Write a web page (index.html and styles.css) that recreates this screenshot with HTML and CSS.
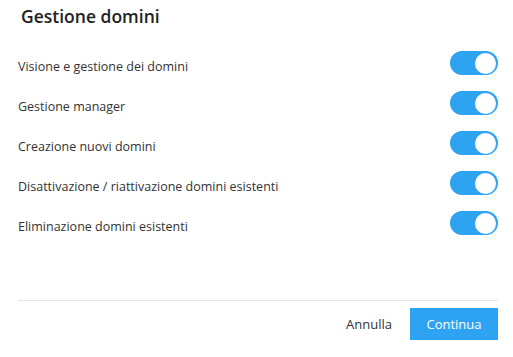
FILE: index.html
```html
<!DOCTYPE html>
<html lang="it">
<head>
  <meta charset="UTF-8">
  <title>Gestione domini</title>
  <link rel="stylesheet" href="styles.css">
</head>
<body>
  <div class="dialog">
    <h2 class="title">Gestione domini</h2>

    <div class="options">
      <div class="option">
        <span>Visione e gestione dei domini</span>
        <span class="toggle on"><span class="knob"></span></span>
      </div>
      <div class="option">
        <span>Gestione manager</span>
        <span class="toggle on"><span class="knob"></span></span>
      </div>
      <div class="option">
        <span>Creazione nuovi domini</span>
        <span class="toggle on"><span class="knob"></span></span>
      </div>
      <div class="option">
        <span>Disattivazione / riattivazione domini esistenti</span>
        <span class="toggle on"><span class="knob"></span></span>
      </div>
      <div class="option">
        <span>Eliminazione domini esistenti</span>
        <span class="toggle on"><span class="knob"></span></span>
      </div>
    </div>

    <div class="footer">
      <button class="btn-link">Annulla</button>
      <button class="btn-primary">Continua</button>
    </div>
  </div>
</body>
</html>
```

FILE: styles.css
```css
body {
  margin: 0;
  background: #ffffff;
  font-family: 'Open Sans', 'Liberation Sans', sans-serif;
  color: #333333;
}
.dialog {
  width: 480px;
  padding: 0 15px 0 18px;
}
.title {
  font-size: 17.5px;
  font-weight: 600;
  margin: 0;
  padding: 4px 0 0 3px;
  height: 38px;
  box-sizing: border-box;
  color: #222222;
}
.options {
  display: flex;
  flex-direction: column;
  padding-top: 8px;
}
.option {
  display: flex;
  justify-content: space-between;
  align-items: center;
  height: 40px;
  font-size: 12.5px;
  color: #333333;
}
.toggle {
  width: 48px;
  height: 24px;
  border-radius: 12px;
  background: #2ea3f2;
  display: flex;
  align-items: center;
  justify-content: flex-end;
  padding: 0 2px;
  box-sizing: border-box;
  margin-bottom: 6px;
}
.knob {
  width: 21px;
  height: 21px;
  border-radius: 50%;
  background: #ffffff;
}
.footer {
  margin-top: 54px;
  border-top: 1px solid #e6e6e6;
  padding-top: 7px;
  display: flex;
  justify-content: flex-end;
  align-items: center;
  gap: 18px;
}
.footer button {
  font-family: inherit;
  font-size: 13px;
  border: none;
  cursor: pointer;
}
.btn-link {
  background: none;
  color: #333333;
  padding: 0;
}
.btn-primary {
  background: #2ea3f2;
  color: #ffffff;
  width: 88px;
  height: 32px;
}
```
